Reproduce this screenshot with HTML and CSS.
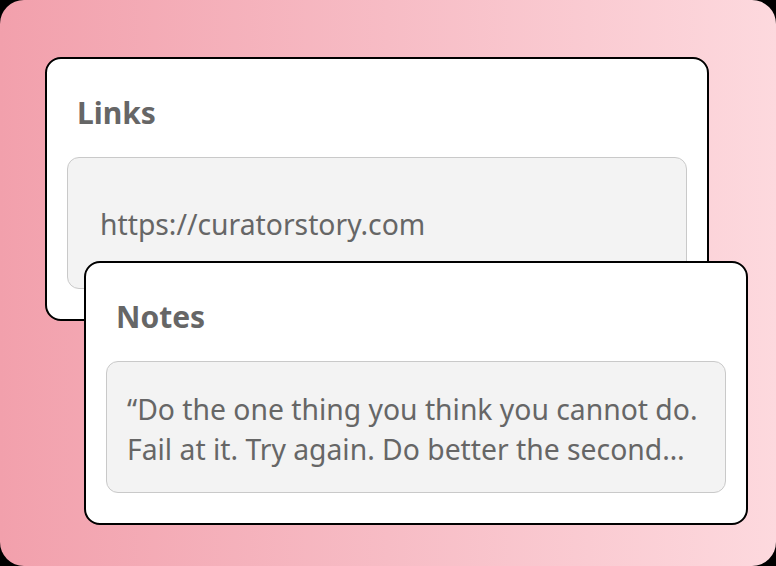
FILE: index.html
```html
<!DOCTYPE html>
<html lang="en">
<head>
<meta charset="utf-8">
<title>Links and Notes</title>
<link rel="stylesheet" href="styles.css">
</head>
<body>
<div class="stage">
  <section class="card card-links">
    <h2 class="card-title">Links</h2>
    <div class="field field-link">https://curatorstory.com</div>
  </section>
  <section class="card card-notes">
    <h2 class="card-title">Notes</h2>
    <div class="field field-note"><p class="note-text">“Do the one thing you think you cannot do. Fail at it. Try again. Do better the second…</p></div>
  </section>
</div>
</body>
</html>
```

FILE: styles.css
```css
html, body {
  margin: 0;
  padding: 0;
  background: #000;
}

body {
  font-family: "Noto Sans", "Open Sans", sans-serif;
  color: #666;
}

.stage {
  width: 776px;
  height: 566px;
  box-sizing: border-box;
  border-radius: 24px;
  overflow: hidden;
  background: linear-gradient(90deg, #f2a0ac 0%, #f7bcc5 50%, #fdd9de 100%);
  padding: 57px 0 0 45px;
}

.card {
  width: 664px;
  height: 264px;
  box-sizing: border-box;
  border: 2px solid #000;
  border-radius: 16px;
  background: #fff;
  padding: 34px 20px 30px 20px;
  display: flex;
  flex-direction: column;
}

.card-notes {
  position: relative;
  margin-top: -60px;
  margin-left: 39px;
}

.card-title {
  margin: 0 0 24px 10px;
  font-size: 30px;
  line-height: 40px;
  font-weight: 700;
  color: #666;
}

.field {
  height: 132px;
  box-sizing: border-box;
  border: 1px solid #c9c9c9;
  border-radius: 12px;
  background: #f3f3f3;
  display: flex;
  align-items: center;
  font-size: 28.3px;
  color: #666;
}

.field-link {
  padding: 2px 20px 0 32px;
}

.field-note {
  padding: 4px 16px 0 20px;
}

.note-text {
  margin: 0;
  line-height: 40px;
}
```
